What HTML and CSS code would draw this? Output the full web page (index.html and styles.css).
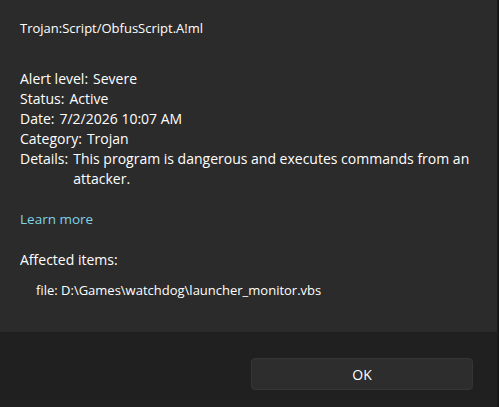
FILE: index.html
```html
<!DOCTYPE html>
<html lang="en">
<head>
    <meta charset="UTF-8">
    <meta name="viewport" content="width=device-width, initial-scale=1.0">
    <title>Threat details</title>
    <link rel="stylesheet" href="styles.css">
</head>
<body>

<div class="dialog">
    <!--Threat details-->
    <div class="content">
        <div class="threat-name">Trojan:Script/ObfusScript.A!ml</div>

        <div class="info">
            <div class="row"><span>Alert level:</span><span>Severe</span></div>
            <div class="row"><span>Status:</span><span>Active</span></div>
            <div class="row"><span>Date:</span><span>7/2/2026 10:07 AM</span></div>
            <div class="row"><span>Category:</span><span>Trojan</span></div>
            <div class="row"><span>Details:</span><span>This program is dangerous and executes commands from an attacker.</span></div>
        </div>

        <a class="learn-more" href="#">Learn more</a>

        <div class="affected-title">Affected items:</div>
        <div class="affected-item">file: D:\Games\watchdog\launcher_monitor.vbs</div>
    </div>

    <!--Footer with OK button-->
    <div class="footer">
        <button class="ok">OK</button>
    </div>
</div>

</body>
</html>
```

FILE: styles.css
```css
body {
    margin: 0;
    padding: 0;
    font-family: "Open Sans", "Noto Sans", sans-serif;
    background-color: #151515;
    color: #ffffff;
}

.dialog {
    width: 497px;
    height: 407px;
    border-right: 1px solid #1a1a1a;
    background-color: #2b2b2b;
    display: flex;
    flex-direction: column;
}

/* Main area */
.content {
    height: 333px;
    padding: 18px 20px 0 20px;
    border-bottom: 1px solid #1d1d1d;
    box-sizing: border-box;
    font-size: 14px;
    line-height: 20px;
}

.threat-name {
    font-size: 13px;
}

.info {
    margin-top: 31px;
}

.row {
    display: flex;
    gap: 5px;
}

.row span:first-child {
    flex-shrink: 0;
}

.learn-more {
    display: inline-block;
    margin-top: 20px;
    color: #80d2e6;
    font-size: 13.5px;
    text-decoration: none;
}

.affected-title {
    margin-top: 21px;
}

.affected-item {
    margin-top: 10px;
    padding-left: 16px;
    font-size: 13px;
}

/* Footer */
.footer {
    flex: 1;
    background-color: #202020;
    display: flex;
    justify-content: flex-end;
    align-items: flex-start;
    padding: 25px 24px 0 0;
}

button.ok {
    width: 222px;
    height: 32px;
    font-family: inherit;
    font-size: 14px;
    color: #ffffff;
    background-color: #2d2d2d;
    border: 1px solid #353535;
    border-radius: 4px;
}
```
